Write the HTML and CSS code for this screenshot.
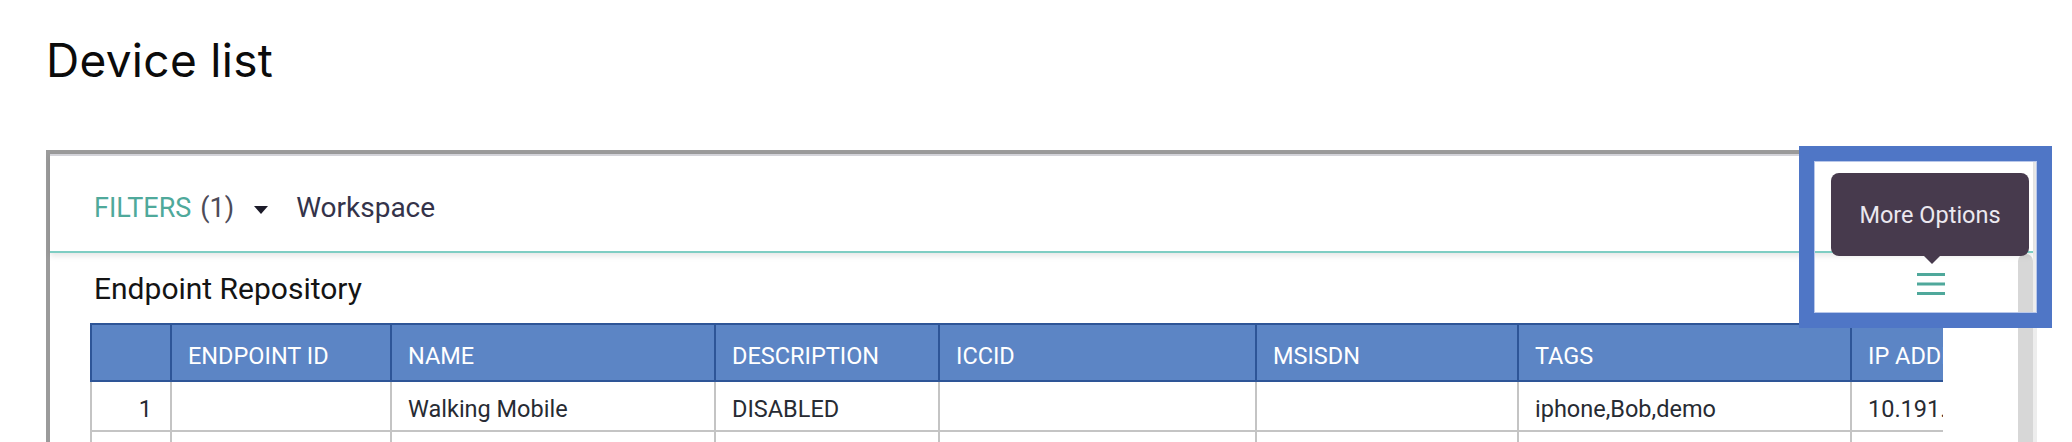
FILE: index.html
```html
<!DOCTYPE html>
<html lang="en">
<head>
<meta charset="utf-8">
<title>Device list</title>
<link rel="stylesheet" href="styles.css">
</head>
<body>
<div class="page">
  <h1 class="title">Device list</h1>
  <div class="card">
    <div class="filter-bar">
      <span class="filters-label">FILTERS</span>
      <span class="filters-count">(1)</span>
      <span class="caret"></span>
      <span class="workspace">Workspace</span>
    </div>
    <div class="card-body">
      <div class="main">
        <div class="section-head">
          <h2 class="section-title">Endpoint Repository</h2>
          <div class="menu">
            <div class="tooltip">More Options</div>
            <svg class="menu-icon" width="28" height="22" viewBox="0 0 28 22" aria-hidden="true">
              <rect x="0" y="0" width="28" height="3" fill="#4fa89b"/>
              <rect x="0" y="9.5" width="28" height="3" fill="#4fa89b"/>
              <rect x="0" y="19" width="28" height="3" fill="#4fa89b"/>
            </svg>
          </div>
        </div>
        <div class="table-wrap">
          <table class="grid">
            <colgroup>
              <col class="c-num"><col class="c-id"><col class="c-name"><col class="c-desc"><col class="c-iccid"><col class="c-msisdn"><col class="c-tags"><col class="c-ip">
            </colgroup>
            <thead>
              <tr>
                <th></th>
                <th>ENDPOINT ID</th>
                <th>NAME</th>
                <th>DESCRIPTION</th>
                <th>ICCID</th>
                <th>MSISDN</th>
                <th>TAGS</th>
                <th>IP ADDRESS</th>
              </tr>
            </thead>
            <tbody>
              <tr>
                <td class="num">1</td>
                <td></td>
                <td>Walking Mobile</td>
                <td>DISABLED</td>
                <td></td>
                <td></td>
                <td>iphone,Bob,demo</td>
                <td>10.191.0.1</td>
              </tr>
              <tr>
                <td class="num"></td>
                <td></td><td></td><td></td><td></td><td></td><td></td><td></td>
              </tr>
            </tbody>
          </table>
        </div>
      </div>
      <div class="scrollbar"></div>
    </div>
  </div>
  <div class="highlight"></div>
</div>
</body>
</html>
```

FILE: styles.css
```css
html, body {
  margin: 0;
  padding: 0;
  background: #ffffff;
  height: 442px;
  overflow: hidden;
}

.page {
  position: relative;
  width: 2072px;
  height: 442px;
  box-sizing: border-box;
  padding: 32px 0 0 46px;
  overflow: hidden;
}

.title {
  margin: 0;
  font-family: Inter, "Liberation Sans", sans-serif;
  font-weight: 400;
  font-size: 46px;
  line-height: 56px;
  letter-spacing: 0.3px;
  color: #0b0b0b;
}

.card {
  margin-top: 62px;
  width: 1991px;
  height: 420px;
  box-sizing: border-box;
  border-top: 4px solid #9b9b9b;
  border-left: 4px solid #9b9b9b;
  border-right: 4px solid #ededed;
  background: #fff;
}

.filter-bar {
  position: relative;
  z-index: 1;
  display: flex;
  align-items: flex-start;
  height: 99px;
  box-sizing: border-box;
  padding: 38px 0 0 44px;
  border-bottom: 2px solid #7ecdc3;
  box-shadow: inset 0 2px 0 #d3d3d9, 0 3px 6px rgba(0, 0, 0, 0.10);
  background: #fff;
  font-family: Roboto, "Liberation Sans", sans-serif;
  font-size: 27px;
  line-height: 32px;
}

.filters-label {
  color: #4fa99b;
}

.filters-count {
  margin-left: 9px;
  color: #4d4b58;
}

.caret {
  margin: 14px 0 0 20px;
  width: 0;
  height: 0;
  border-left: 7.5px solid transparent;
  border-right: 7.5px solid transparent;
  border-top: 8px solid #1c1b29;
}

.workspace {
  margin-left: 28px;
  color: #34334a;
  font-size: 28px;
}

.card-body {
  display: flex;
  align-items: stretch;
  height: 300px;
}

.main {
  flex: 1;
  min-width: 0;
  padding: 18px 75px 0 40px;
}

.section-head {
  display: flex;
  justify-content: space-between;
  align-items: flex-start;
  height: 36px;
  padding-left: 4px;
  margin-right: -2px;
}

.section-title {
  margin: 0;
  font-family: Roboto, "Liberation Sans", sans-serif;
  font-weight: 400;
  font-size: 30px;
  line-height: 36px;
  color: #141414;
}

.menu {
  position: relative;
  width: 28px;
  height: 22px;
  margin-top: 2px;
}

.menu-icon {
  display: block;
}

.tooltip {
  position: absolute;
  z-index: 5;
  left: -86px;
  bottom: calc(100% + 17px);
  width: 198px;
  height: 83px;
  display: flex;
  align-items: center;
  justify-content: center;
  border-radius: 8px;
  background: #473a4d;
  color: #ebe8ef;
  font-family: Roboto, "Liberation Sans", sans-serif;
  font-size: 23.5px;
  line-height: 28px;
  white-space: nowrap;
}

.tooltip::after {
  content: "";
  position: absolute;
  top: 100%;
  left: 93px;
  width: 0;
  height: 0;
  border-left: 8px solid transparent;
  border-right: 8px solid transparent;
  border-top: 8px solid #473a4d;
}

.table-wrap {
  margin-top: 16px;
  overflow: hidden;
}

.grid {
  border-collapse: collapse;
  table-layout: fixed;
  width: 1960px;
  font-family: Roboto, "Liberation Sans", sans-serif;
  font-size: 23.5px;
  line-height: 28px;
}

.c-num { width: 80px; }
.c-id { width: 220px; }
.c-name { width: 324px; }
.c-desc { width: 224px; }
.c-iccid { width: 317px; }
.c-msisdn { width: 262px; }
.c-tags { width: 333px; }
.c-ip { width: 200px; }

.grid th {
  background: #5c85c5;
  color: #ffffff;
  border: 2px solid #2e5597;
  font-weight: 400;
  text-align: left;
  padding: 17px 16px 10px;
  white-space: nowrap;
  overflow: hidden;
}

.grid td {
  border: 2px solid #c4c4c4;
  color: #272b33;
  padding: 13px 16px 7px;
  white-space: nowrap;
  overflow: hidden;
  height: 28px;
}

.grid td.num {
  text-align: right;
  padding-right: 18px;
}

.scrollbar {
  width: 15px;
  margin-top: 1px;
  background: #d7d7d7;
  border-radius: 7px 7px 0 0;
}

.highlight {
  position: absolute;
  z-index: 10;
  left: 1799px;
  top: 146px;
  width: 253px;
  height: 182px;
  box-sizing: border-box;
  border: 15px solid #4f76c6;
  box-shadow: inset 0 0 0 1px #b8c7ea;
}
```
